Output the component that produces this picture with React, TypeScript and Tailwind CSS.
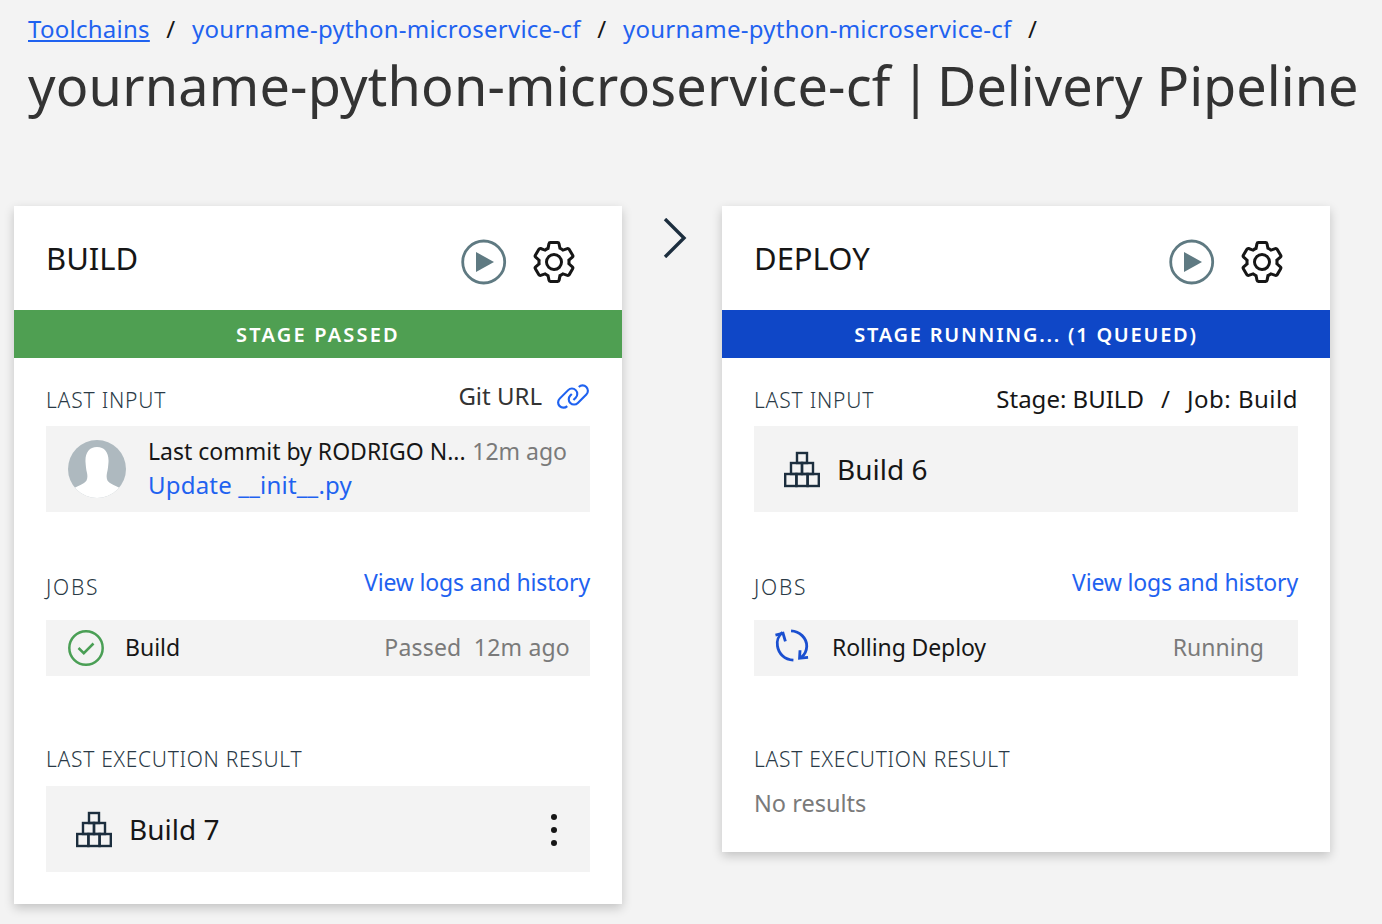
function Gear() {
  return (
    <svg width="48" height="48" viewBox="0 0 32 32" fill="#161616">
      <path d="M27,16.76c0-.25,0-.5,0-.76s0-.51,0-.77l1.92-1.68A2,2,0,0,0,29.3,11L26.94,7a2,2,0,0,0-1.73-1,2,2,0,0,0-.64.1l-2.43.82a11.35,11.35,0,0,0-1.31-.75l-.51-2.52a2,2,0,0,0-2-1.61H13.64a2,2,0,0,0-2,1.61l-.51,2.52a11.48,11.48,0,0,0-1.32.75L7.43,6.06A2,2,0,0,0,6.79,6,2,2,0,0,0,5.06,7L2.7,11a2,2,0,0,0,.41,2.51L5,15.24c0,.25,0,.5,0,.76s0,.51,0,.77L3.11,18.45A2,2,0,0,0,2.7,21L5.06,25a2,2,0,0,0,1.73,1,2,2,0,0,0,.64-.1l2.43-.82a11.35,11.35,0,0,0,1.31.75l.51,2.52a2,2,0,0,0,2,1.61h4.72a2,2,0,0,0,2-1.61l.51-2.52a11.48,11.48,0,0,0,1.32-.75l2.42.82a2,2,0,0,0,.64.1,2,2,0,0,0,1.73-1L29.3,21a2,2,0,0,0-.41-2.51ZM25.21,24l-3.43-1.16a8.86,8.86,0,0,1-2.71,1.57L18.36,28H13.64l-.71-3.55a9.36,9.36,0,0,1-2.7-1.57L6.79,24,4.43,20l2.72-2.4a8.9,8.9,0,0,1,0-3.13L4.43,12,6.79,8l3.43,1.16a8.86,8.86,0,0,1,2.71-1.57L13.64,4h4.72l.71,3.55a9.36,9.36,0,0,1,2.7,1.57L25.21,8,27.57,12l-2.72,2.4a8.9,8.9,0,0,1,0,3.13L27.57,20Z" />
      <path d="M16,22a6,6,0,1,1,6-6A5.94,5.94,0,0,1,16,22Zm0-10a3.91,3.91,0,0,0-4,4,3.91,3.91,0,0,0,4,4,3.91,3.91,0,0,0,4-4A3.91,3.91,0,0,0,16,12Z" />
    </svg>
  );
}

function Play() {
  return (
    <svg width="46" height="46" viewBox="0 0 46 46">
      <circle cx="22.7" cy="23" r="21" fill="none" stroke="#5f7a82" strokeWidth="2.8" />
      <path d="M15 13 L33 23 L15 33 Z" fill="#5f7a82" />
    </svg>
  );
}

function LinkIcon() {
  return (
    <svg width="34" height="34" viewBox="0 0 32 32" fill="#1f62f0">
      <path d="M29.25,6.76a6,6,0,0,0-8.5,0l1.42,1.42a4,4,0,1,1,5.67,5.67l-8,8a4,4,0,1,1-5.67-5.66l1.41-1.42-1.41-1.42-1.42,1.42a6,6,0,0,0,0,8.5A6,6,0,0,0,17,25a6,6,0,0,0,4.27-1.76l8-8A6,6,0,0,0,29.25,6.76Z" />
      <path d="M4.19,24.82a4,4,0,0,1,0-5.67l8-8a4,4,0,0,1,5.67,0A3.94,3.94,0,0,1,19,14a4,4,0,0,1-1.17,2.85L15.71,19l1.42,1.42,2.12-2.12a6,6,0,0,0-8.51-8.51l-8,8a6,6,0,0,0,0,8.51A6,6,0,0,0,7,28a6.07,6.07,0,0,0,4.28-1.76L9.86,24.82A4,4,0,0,1,4.19,24.82Z" />
    </svg>
  );
}

function Stack() {
  return (
    <svg width="36" height="38" viewBox="0 0 36 38" fill="none" stroke="#1c2e3e" strokeWidth="2.4">
      <rect x="13" y="3" width="10" height="10" />
      <rect x="7" y="13" width="11" height="11" />
      <rect x="18" y="13" width="11" height="11" />
      <rect x="1.2" y="24" width="11.2" height="12" />
      <rect x="12.4" y="24" width="11.2" height="12" />
      <rect x="23.6" y="24" width="11.2" height="12" />
    </svg>
  );
}

function Check() {
  return (
    <svg width="36" height="36" viewBox="0 0 36 36" fill="none" stroke="#4a9f55" strokeWidth="2.5">
      <circle cx="18" cy="18" r="16.7" />
      <path d="M10.5 18 L15.8 23.2 L25.5 13.5" />
    </svg>
  );
}

function Renew() {
  return (
    <svg width="34" height="34" viewBox="0 0 36 36" fill="none" stroke="#1a4fd0" strokeWidth="3" className="-mt-[4px]">
      <path d="M8 3.5 C3.5 7 1.6 13 2.6 18 C3.8 26 10 32.4 19.5 33" />
      <path d="M0.5 6.5 L8.5 4.5 L11 13" />
      <path d="M17 2 C26 2.4 33.8 9.5 33.6 18.5 C33.4 23.5 31 27.5 27.8 30" />
      <path d="M26.5 22.5 L26 30.8 L35 30" />
    </svg>
  );
}

function Avatar() {
  return (
    <svg width="58" height="58" viewBox="0 0 58 58">
      <defs>
        <clipPath id="avatar-clip">
          <circle cx="29" cy="29" r="29" />
        </clipPath>
      </defs>
      <g clipPath="url(#avatar-clip)">
        <rect width="58" height="58" fill="#aeb9bf" />
        <path d="M29 7 C21 7 17 13 17.5 22 C17.8 26 18 29 19 33 C20 38 19 41 16 43 C12 45.5 8 47 2 50 L2 60 L56 60 L56 50 C50 47 46 45.5 42 43 C39 41 38 38 39 33 C40 29 40.2 26 40.5 22 C41 13 37 7 29 7 Z" fill="#ffffff" />
      </g>
    </svg>
  );
}

function Label({ children, tracking }: { children: React.ReactNode; tracking: string }) {
  return <span className={`text-[21px] leading-[28px] font-light text-[#2a3a46] ${tracking}`}>{children}</span>;
}

function Card({ title, banner, bannerClass, children }: { title: string; banner: string; bannerClass: string; children: React.ReactNode }) {
  return (
    <section className="w-[608px] bg-white shadow-[0_4px_10px_rgba(0,0,0,0.2)]">
      <div className="flex h-[104px] items-center pl-[32px] pr-[44px]">
        <h2 className="text-[31px] font-normal leading-[40px] text-[#161616]">{title}</h2>
        <div className="ml-auto flex items-center gap-[23px] mt-[8px]">
          <Play />
          <Gear />
        </div>
      </div>
      <div className={`flex h-[48px] items-center justify-center pt-[2px] text-[20px] font-semibold text-white ${bannerClass}`}>{banner}</div>
      <div className="px-[32px]">{children}</div>
    </section>
  );
}

function Row({ label, tracking, right, h }: { label: string; tracking: string; right?: React.ReactNode; h: string }) {
  return (
    <div className={`flex items-end justify-between ${h}`}>
      <Label tracking={tracking}>{label}</Label>
      {right}
    </div>
  );
}

const logs = <a className="text-[23px] leading-[30px] tracking-[-0.15px] text-[#1f62f0] pb-[4px]">View logs and history</a>;

export default function App() {
  return (
    <div className="min-h-[924px] bg-[#f3f3f3] overflow-hidden text-[#161616] [font-family:'Noto_Sans',sans-serif]">
      <nav className="flex items-center h-[28px] mt-[15px] pl-[28px] text-[24px] leading-[28px] tracking-[0.26px] text-[#1f62f0]">
        <a className="underline">Toolchains</a>
        <span className="mx-[16.5px] text-[#161616]">/</span>
        <a>yourname-python-microservice-cf</a>
        <span className="mx-[16.5px] text-[#161616]">/</span>
        <a>yourname-python-microservice-cf</a>
        <span className="mx-[16.5px] text-[#161616]">/</span>
      </nav>
      <h1 className="pl-[28px] mt-[10px] text-[54px] leading-[64px] font-normal tracking-[0.2px] [word-spacing:-4px] text-[#333] whitespace-nowrap">
        yourname-python-microservice-cf |{" "}
        <span className="ml-[-4px] tracking-normal [word-spacing:0px]">Delivery Pipeline</span>
      </h1>
      <main className="flex items-start mt-[89px] ml-[14px]">
        <Card title="BUILD" banner="STAGE PASSED" bannerClass="bg-[#4f9f52] tracking-[2.2px]">
          <Row
            label="LAST INPUT"
            tracking="tracking-[0.8px]"
            h="h-[56px]"
            right={
              <div className="flex items-center gap-[14px] mb-[1px] text-[24px] leading-[30px] text-[#333]">
                Git URL
                <LinkIcon />
              </div>
            }
          />
          <div className="mt-[12px] flex h-[86px] items-center bg-[#f3f3f3] pl-[22px] pr-[23px]">
            <Avatar />
            <div className="ml-[22px] mb-[2px] flex-1">
              <div className="flex justify-between whitespace-nowrap text-[23px] leading-[34px]">
                <span>Last commit by RODRIGO N...</span>
                <span className="text-[#7a7a7a]">12m ago</span>
              </div>
              <a className="block text-[24px] leading-[34px] tracking-[0.2px] text-[#1f62f0]">Update __init__.py</a>
            </div>
          </div>
          <Row label="JOBS" tracking="tracking-[1.8px]" h="h-[89px]" right={logs} />
          <div className="mt-[19px] flex h-[56px] items-center bg-[#f3f3f3] pl-[22px] pr-[20px] text-[23px]">
            <Check />
            <span className="ml-[21px] mb-[2px]">Build</span>
            <span className="ml-auto mb-[2px] tracking-[0.2px] text-[#7a7a7a]">Passed&nbsp; 12m ago</span>
          </div>
          <Row label="LAST EXECUTION RESULT" tracking="tracking-[0.7px]" h="h-[97px]" />
          <div className="mt-[13px] flex h-[86px] items-center bg-[#f3f3f3] pl-[30px] pr-[33px]">
            <Stack />
            <span className="ml-[17px] text-[28px]">Build 7</span>
            <span className="ml-auto mt-[2px] flex flex-col gap-[7px]">
              <i className="block h-[6px] w-[6px] rounded-full bg-[#161616]" />
              <i className="block h-[6px] w-[6px] rounded-full bg-[#161616]" />
              <i className="block h-[6px] w-[6px] rounded-full bg-[#161616]" />
            </span>
          </div>
          <div className="h-[32px]" />
        </Card>
        <div className="flex w-[100px] justify-center pt-[12px] pl-[6px]">
          <svg width="26" height="40" viewBox="0 0 26 40" fill="none" stroke="#1c2e3e" strokeWidth="3.4">
            <path d="M3 1 L22 20 L3 39" />
          </svg>
        </div>
        <Card title="DEPLOY" banner="STAGE RUNNING... (1 QUEUED)" bannerClass="bg-[#0f47c7] tracking-[1.75px]">
          <Row
            label="LAST INPUT"
            tracking="tracking-[0.8px]"
            h="h-[56px]"
            right={
              <div className="text-[24px] leading-[30px] text-[#161616]">
                Stage: BUILD<span className="mx-[17px]">/</span>
                <span className="tracking-[0.5px]">Job: Build</span>
              </div>
            }
          />
          <div className="mt-[12px] flex h-[86px] items-center bg-[#f3f3f3] pl-[30px]">
            <Stack />
            <span className="ml-[17px] text-[28px]">Build 6</span>
          </div>
          <Row label="JOBS" tracking="tracking-[1.8px]" h="h-[89px]" right={logs} />
          <div className="mt-[19px] flex h-[56px] items-center bg-[#f3f3f3] pl-[21px] pr-[34px] text-[23px]">
            <Renew />
            <span className="ml-[23px] mb-[2px] tracking-[-0.1px]">Rolling Deploy</span>
            <span className="ml-auto mb-[2px] text-[#7a7a7a]">Running</span>
          </div>
          <Row label="LAST EXECUTION RESULT" tracking="tracking-[0.7px]" h="h-[97px]" />
          <div className="mt-[15px] text-[23.5px] leading-[30px] text-[#7a7a7a]">No results</div>
          <div className="h-[34px]" />
        </Card>
      </main>
    </div>
  );
}
